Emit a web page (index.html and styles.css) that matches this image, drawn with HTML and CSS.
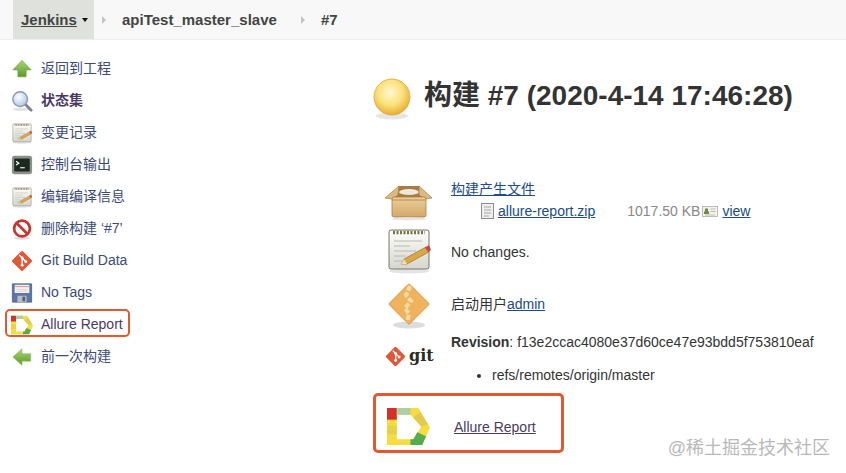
FILE: index.html
```html
<!doctype html>
<html>
<head>
    <meta charset="UTF-8">
    <title>apiTest_master_slave #7 - Jenkins</title>
    <link rel="stylesheet" href="styles.css">
</head>
<body>
<svg class="defs" width="0" height="0">
    <defs>
        <linearGradient id="paperFill" x1="0" y1="0" x2="0" y2="1">
            <stop offset="0" stop-color="#fdfdfa"/><stop offset="1" stop-color="#d6d6d0"/>
        </linearGradient>
        <radialGradient id="ballFill" cx="0.45" cy="0.38" r="0.62">
            <stop offset="0" stop-color="#fff8d2"/><stop offset="0.55" stop-color="#fbe27c"/><stop offset="1" stop-color="#e7ae35"/>
        </radialGradient>
        <linearGradient id="greenFill" x1="0" y1="0" x2="0" y2="1">
            <stop offset="0" stop-color="#a8d672"/><stop offset="1" stop-color="#5b9b2c"/>
        </linearGradient>
        <linearGradient id="boxFill" x1="0" y1="0" x2="0" y2="1">
            <stop offset="0" stop-color="#eccf9c"/><stop offset="1" stop-color="#d3a86a"/>
        </linearGradient>
        <radialGradient id="glassFill" cx="0.4" cy="0.35" r="0.7">
            <stop offset="0" stop-color="#ffffff"/><stop offset="1" stop-color="#a9c6e6"/>
        </radialGradient>

        <symbol id="notepad" viewBox="0 0 48 48">
            <ellipse cx="24" cy="45" rx="20" ry="2.500" fill="#e4e4e4"/>
            <rect x="4" y="4" width="40" height="39" rx="2" fill="url(#paperFill)" stroke="#77776f" stroke-width="1"/>
            <path d="M8 6.500h32" stroke="#7a7442" stroke-width="3.500" stroke-dasharray="2 1.500"/>
            <path d="M9 15h28M9 20h16M9 25h22M9 30h12M9 35h18" stroke="#b4b4ac" stroke-width="0.900"/>
            <path d="M16 38l3-5 22-12 3 5-22 12z" fill="#dca644" stroke="#8a6a2a" stroke-width="0.600"/>
            <path d="M40 21.500l4-2.500 2 5-3 2z" fill="#c8484a"/>
            <path d="M16 38l3-5 3 5z" fill="#f0dcb4"/>
        </symbol>
        <symbol id="gitDiamond" viewBox="0 0 24 24">
            <rect x="3.800" y="3.800" width="16.400" height="16.400" rx="1.600" transform="rotate(45 12 12)" fill="#e0583a"/>
            <path d="M9 5.500l3.200 3.200M12.200 8.700v8M12.200 8.700l4 4" stroke="#fff" stroke-width="1.500" fill="none"/>
            <circle cx="12.200" cy="8.700" r="1.600" fill="#fff"/><circle cx="12.200" cy="16.500" r="1.600" fill="#fff"/><circle cx="16.200" cy="12.700" r="1.600" fill="#fff"/>
        </symbol>
        <symbol id="allure" viewBox="0 0 44 38">
            <path fill-rule="evenodd" d="M0 0H32L44 20L36 38H0zM10 7V32H27L35 19L24 7z" fill="#f7dc3f"/>
            <path d="M0 18h10v9h-10z" fill="#e8d04c"/>
            <path d="M0 0h10v12h-10z" fill="#d42f2a"/>
            <path d="M10 0h14v7h-14z" fill="#adcfa2"/>
            <path d="M27 10l7-6 8 13-7 2z" fill="#e2cb4c"/>
            <path d="M31 25l9 4-4 9H24v-6h3z" fill="#56ad4d"/>
        </symbol>
    </defs>
</svg>

<header class="breadcrumbs">
    <div class="crumb crumb-root"><a href="#">Jenkins</a><span class="caret"></span></div>
    <span class="sep"></span>
    <div class="crumb crumb-job">apiTest_master_slave</div>
    <span class="sep"></span>
    <div class="crumb">#7</div>
</header>

<div class="page">
    <nav class="side">
        <a class="task" href="#">
            <svg class="task-icon" viewBox="0 0 24 24"><path d="M12 2.500L22 13h-5.500v7.500h-9V13H2z" fill="url(#greenFill)" stroke="#6fa341" stroke-width="0.700"/></svg>
            <span>返回到工程</span>
        </a>
        <a class="task task-current" href="#">
            <svg class="task-icon" viewBox="0 0 24 24"><ellipse cx="11" cy="21" rx="9" ry="2" fill="#e4e4e4"/><path d="M15 15l7 7" stroke="#7f7f88" stroke-width="3" stroke-linecap="round"/><circle cx="10" cy="10" r="8" fill="url(#glassFill)" stroke="#8d9bad" stroke-width="1.600"/></svg>
            <span>状态集</span>
        </a>
        <a class="task" href="#">
            <svg class="task-icon" viewBox="0 0 48 48"><use href="#notepad"/></svg>
            <span>变更记录</span>
        </a>
        <a class="task" href="#">
            <svg class="task-icon" viewBox="0 0 24 24"><rect x="1" y="2" width="22" height="20" rx="3" fill="#8b9089"/><rect x="3.500" y="5" width="17" height="14" rx="1" fill="#1f2a1f"/><path d="M5.500 8l3 2-3 2" stroke="#fff" stroke-width="1.300" fill="none"/><path d="M10 15h5" stroke="#fff" stroke-width="1.200"/></svg>
            <span>控制台输出</span>
        </a>
        <a class="task" href="#">
            <svg class="task-icon" viewBox="0 0 48 48"><use href="#notepad"/></svg>
            <span>编辑编译信息</span>
        </a>
        <a class="task" href="#">
            <svg class="task-icon" viewBox="0 0 24 24"><ellipse cx="12" cy="22" rx="9" ry="1.600" fill="#ddd"/><circle cx="12" cy="11.500" r="8.600" fill="#fff" stroke="#c9352f" stroke-width="3"/><path d="M6 5.500l12 12" stroke="#c9352f" stroke-width="3"/></svg>
            <span>删除构建 ‘#7’</span>
        </a>
        <a class="task" href="#">
            <svg class="task-icon" viewBox="0 0 24 24"><use href="#gitDiamond"/></svg>
            <span>Git Build Data</span>
        </a>
        <a class="task" href="#">
            <svg class="task-icon" viewBox="0 0 24 24"><path d="M1.500 2h21v20h-21z" fill="#5a76a8" stroke="#42567e" stroke-width="0.800"/><rect x="4" y="3" width="16" height="9" fill="#f4f1ee"/><path d="M4 5h16" stroke="#d98a80"/><path d="M6 8h12M6 10h12" stroke="#cfcfcf" stroke-width="0.800"/><rect x="7" y="15" width="10" height="7" fill="#b9bcc2"/><rect x="12.500" y="16" width="3" height="5" fill="#56606f"/></svg>
            <span>No Tags</span>
        </a>
        <a class="task task-marked" href="#">
            <svg class="task-icon" viewBox="0 0 44 38"><use href="#allure"/></svg>
            <span>Allure Report</span>
        </a>
        <a class="task" href="#">
            <svg class="task-icon" viewBox="0 0 24 24"><path d="M2 12L12 3v5.500h9.500v8H12V21z" fill="url(#greenFill)" stroke="#8dbd62" stroke-width="0.700"/></svg>
            <span>前一次构建</span>
        </a>
    </nav>

    <main class="main">
        <h1 class="title">
            <svg class="ball" viewBox="0 0 38 42"><ellipse cx="19" cy="38" rx="16" ry="3.500" fill="#e6e6e6"/><circle cx="19" cy="19" r="18" fill="url(#ballFill)" stroke="#d9a93e" stroke-width="0.800"/></svg>
            构建 #7 (2020-4-14 17:46:28)
        </h1>

        <section class="row row-artifacts">
            <div class="row-icon">
                <svg class="box-icon" viewBox="0 0 47 36">
                    <path d="M8 12L14 1h20l6 11z" fill="#a87b42"/>
                    <ellipse cx="24" cy="7" rx="10" ry="3" fill="#ece8dc"/>
                    <path d="M14 1L0 13l7 1 6-4zM34 1l13 12-7 1-6-4z" fill="#dcb97f" stroke="#a87b42" stroke-width="0.700"/>
                    <rect x="7" y="12" width="34" height="20" rx="2" fill="url(#boxFill)" stroke="#a87b42" stroke-width="0.800"/>
                    <path d="M7 15h34" stroke="#a87b42" stroke-width="0.800"/>
                    <ellipse cx="24" cy="34" rx="18" ry="1.500" fill="#e6e6e6"/>
                </svg>
            </div>
            <div class="row-body">
                <a href="#">构建产生文件</a>
                <div class="file">
                    <svg class="file-icon" viewBox="0 0 13 16"><rect x="0.500" y="0.500" width="12" height="15" fill="#eee" stroke="#8f8f8f"/><path d="M3 4h7M3 7h7M3 10h7M3 13h5" stroke="#aaa"/></svg>
                    <a href="#">allure-report.zip</a>
                    <span class="file-size">1017.50 KB</span>
                    <svg class="view-icon" viewBox="0 0 16 11"><rect x="0.500" y="0.500" width="15" height="10" fill="#f2f2ea" stroke="#bbb"/><path d="M3 2.500h3v3h1v2.500h-5v-2.500h1z" fill="#6e8c3c"/><path d="M8.500 3h5M8.500 5.500h5M3 9h10" stroke="#bbb"/></svg>
                    <a href="#">view</a>
                </div>
            </div>
        </section>

        <section class="row row-changes">
            <div class="row-icon"><svg class="icon-48" viewBox="0 0 48 48"><use href="#notepad"/></svg></div>
            <div class="row-body">No changes.</div>
        </section>

        <section class="row row-user">
            <div class="row-icon">
                <svg class="icon-48" viewBox="0 0 48 48">
                    <ellipse cx="24" cy="43" rx="16" ry="3.500" fill="#ddd"/>
                    <rect x="9.500" y="7.500" width="29" height="29" rx="1.500" transform="rotate(45 24 22)" fill="#eeb35c" stroke="#d68f35" stroke-width="0.800"/>
                    <path d="M25 4l-4 9 5 6-6 7 4 6-2 8" stroke="#f7dca6" stroke-width="4" fill="none" stroke-dasharray="5 2"/>
                </svg>
            </div>
            <div class="row-body">启动用户<a href="#">admin</a></div>
        </section>

        <section class="row row-git">
            <div class="row-icon">
                <div class="git-logo">
                    <svg class="git-mark" viewBox="0 0 24 24"><use href="#gitDiamond"/></svg>
                    <span class="git-word">git</span>
                </div>
            </div>
            <div class="row-body">
                <div><b>Revision</b>: f13e2ccac4080e37d60ce47e93bdd5f753810eaf</div>
                <ul class="refs"><li>refs/remotes/origin/master</li></ul>
            </div>
        </section>

        <section class="row row-allure">
            <svg class="allure-big" viewBox="0 0 44 38"><use href="#allure"/></svg>
            <a class="allure-link" href="#">Allure Report</a>
        </section>
    </main>
</div>

<div class="watermark">@稀土掘金技术社区</div>
</body>
</html>
```

FILE: styles.css
```css
html, body {
    height: 100%;
}
body {
    margin: 0;
    overflow: hidden;
    position: relative;
    background: #fff;
    color: #333;
    font-family: "Liberation Sans", "Noto Sans CJK SC", sans-serif;
    font-size: 14px;
    line-height: 18px;
}
a {
    color: #204a87;
}
.defs {
    position: absolute;
}

/* breadcrumb bar */
.breadcrumbs {
    height: 39px;
    display: flex;
    align-items: center;
    padding-left: 13px;
    background: #f8f8f8;
    border-bottom: 1px solid #eeeeee;
    font-size: 15px;
    font-weight: bold;
    color: #444;
}
.crumb-root {
    align-self: stretch;
    width: 81px;
    box-sizing: border-box;
    padding-left: 8px;
    display: flex;
    align-items: center;
    background: #dfe1dc;
}
.crumb-root a {
    color: #444;
}
.caret {
    margin-left: 5px;
    margin-top: 1px;
    border-left: 3.500px solid transparent;
    border-right: 3.500px solid transparent;
    border-top: 4px solid #111;
}
.sep {
    width: 0;
    height: 0;
    margin-left: 8px;
    border-top: 4.500px solid transparent;
    border-bottom: 4.500px solid transparent;
    border-left: 4.500px solid #c4c4c4;
}
.crumb-job {
    margin-left: 16px;
    width: 179px;
}
.crumb-job + .sep {
    margin-left: 0;
}
.crumb-job + .sep + .crumb {
    margin-left: 16px;
}

.page {
    display: flex;
}

/* left side tasks */
.side {
    width: 373px;
    flex: none;
    box-sizing: border-box;
    padding: 12px 0 0 11px;
}
.task {
    height: 32px;
    display: flex;
    align-items: center;
    gap: 8px;
    color: #3c4a74;
    font-size: 14px;
    text-decoration: none;
}
.task-icon {
    width: 22px;
    height: 22px;
    flex: none;
    margin-top: 2px;
}
.task-current {
    font-weight: bold;
    color: #4b3a62;
}
.task-marked {
    position: relative;
    color: #4b3a62;
}
.task-marked::after {
    content: "";
    position: absolute;
    left: -6px;
    top: 1px;
    width: 125px;
    height: 28px;
    box-sizing: border-box;
    border: 2px solid #e2582f;
    border-radius: 5px;
}

/* build details */
.main {
    flex: 1;
}
.title {
    margin: 38px 0 0;
    height: 42px;
    display: flex;
    align-items: flex-start;
    gap: 13px;
    font-size: 28px;
    line-height: 36px;
    color: #333;
}
.ball {
    width: 38px;
    height: 42px;
    flex: none;
}
.row {
    display: flex;
}
.row-icon {
    width: 78px;
    flex: none;
    box-sizing: border-box;
    padding-left: 12px;
}
.icon-48 {
    width: 48px;
    height: 48px;
    display: block;
}
.box-icon {
    width: 47px;
    height: 36px;
    display: block;
    margin-top: 5px;
}
.row-body {
    flex: 1;
}
.row-artifacts {
    margin-top: 60px;
    height: 46px;
    align-items: flex-start;
}
.file {
    margin: 4px 0 0 30px;
    height: 18px;
    display: flex;
    align-items: center;
}
.file-icon {
    width: 13px;
    height: 16px;
    margin-right: 4px;
}
.file-size {
    margin-left: 32px;
    color: #888;
}
.view-icon {
    width: 16px;
    height: 11px;
    margin: 0 4px 0 2px;
}
.row-changes {
    height: 52px;
    align-items: center;
}
.row-changes .row-icon {
    margin-bottom: 4px;
}
.row-user {
    height: 52px;
    align-items: center;
}
.row-user .row-icon {
    margin-top: 4px;
}
.row-git {
    height: 60px;
    padding-top: 3px;
    box-sizing: border-box;
}
.git-logo {
    margin-top: 12px;
    display: flex;
    align-items: center;
    gap: 3px;
}
.git-mark {
    width: 21px;
    height: 21px;
}
.git-word {
    font-family: "DejaVu Serif", serif;
    font-weight: bold;
    font-size: 16px;
    line-height: 22px;
    color: #2c2c1e;
}
.refs {
    margin: 15px 0 0;
    padding-left: 41px;
}
.row-allure {
    width: 191px;
    height: 60px;
    margin-top: 3px;
    padding-top: 7px;
    box-sizing: border-box;
    border: 3px solid #e2582f;
    border-radius: 5px;
    align-items: center;
}
.allure-big {
    width: 43px;
    height: 39px;
    margin-left: 11px;
}
.allure-link {
    margin-left: 24px;
    color: #4b3a62;
}

.watermark {
    position: absolute;
    right: 16px;
    bottom: 14px;
    font-size: 18px;
    line-height: 22px;
    color: #b9b9b9;
}
```
